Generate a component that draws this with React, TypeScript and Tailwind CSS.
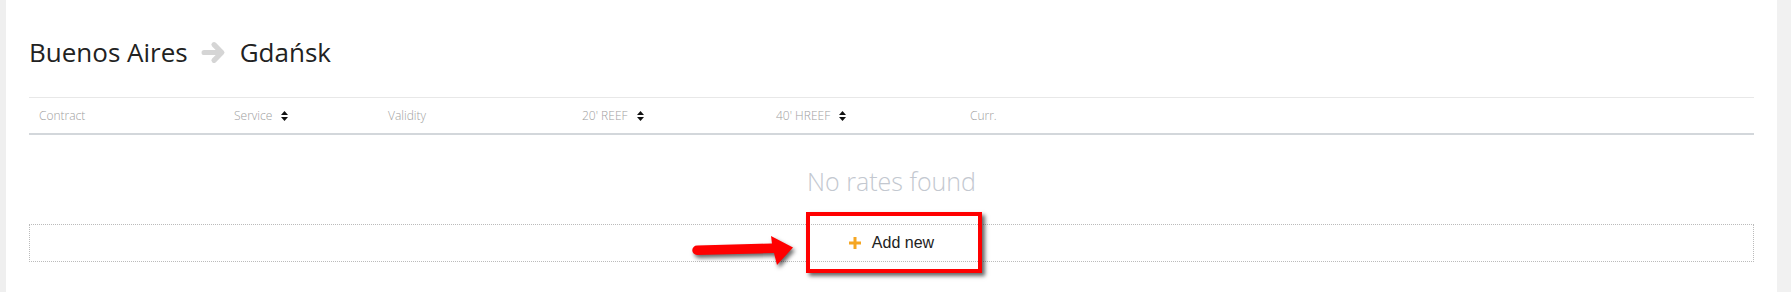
import { ReactNode } from 'react';

function SortIcon() {
  return (
    <svg width="7" height="10" viewBox="0 0 7 10" className="ml-[9px] shrink-0">
      <path d="M0 4 L3.5 0 L7 4 Z" fill="#111" />
      <path d="M0 6 L3.5 10 L7 6 Z" fill="#111" />
    </svg>
  );
}

function HeaderCell({ children, sortable }: { children: ReactNode; sortable?: boolean }) {
  return (
    <div className="flex items-center pl-[10px] text-[12px] font-light text-[#a0a0a0]">
      <span>{children}</span>
      {sortable && <SortIcon />}
    </div>
  );
}

export default function App() {
  return (
    <div className="flex h-[292px] w-full bg-[#f1f1f1] font-['Open_Sans',sans-serif]">
      <div className="w-[6px] shrink-0 bg-[#efefef]" />
      <div className="flex-1 bg-white px-[23px]">
        <h2 className="mt-[35px] flex items-center text-[26px] leading-[34px] text-[#222]">
          <span>Buenos Aires</span>
          <svg width="25" height="25" viewBox="0 0 24 24" className="ml-[13px] mr-[14px]">
            <path
              d="M3 12 H19 M12.5 4.5 L20 12 L12.5 19.5"
              fill="none"
              stroke="#d5d5d5"
              strokeWidth="5"
              strokeLinecap="round"
              strokeLinejoin="round"
            />
          </svg>
          <span>Gdańsk</span>
        </h2>

        <div className="mt-[28px] border-t border-[#e8e8e8]">
          <div className="grid h-[37px] grid-cols-[195px_154px_194px_194px_194px_1fr] items-center border-b-2 border-[#d3d7db]">
            <HeaderCell>Contract</HeaderCell>
            <HeaderCell sortable>Service</HeaderCell>
            <HeaderCell>Validity</HeaderCell>
            <HeaderCell sortable>20' REEF</HeaderCell>
            <HeaderCell sortable>40' HREEF</HeaderCell>
            <HeaderCell>Curr.</HeaderCell>
          </div>
        </div>

        <p className="mt-[30px] text-center text-[25px] font-light leading-[32px] text-[#c3c8d0]">
          No rates found
        </p>

        <div className="relative mt-[27px] flex h-[38px] items-center justify-center border border-dotted border-[#bbbbbb]">
          <button className="flex items-center font-['Liberation_Sans',Arial,sans-serif] text-[16px] text-[#222]">
            <svg width="12" height="12" viewBox="0 0 12 12">
              <rect x="4.5" y="0" width="3" height="12" fill="#f5a623" />
              <rect x="0" y="4.5" width="12" height="3" fill="#f5a623" />
            </svg>
            <span className="ml-[11px]">Add new</span>
          </button>

          {/* annotation overlay */}
          <div className="pointer-events-none absolute left-[calc(50%+2px)] top-[-13px] h-[61px] w-[176px] -translate-x-1/2 border-[4px] border-[#ff0000] shadow-[3px_3px_4px_rgba(0,0,0,0.6)]" />
          <svg
            width="104"
            height="34"
            viewBox="0 0 104 34"
            className="pointer-events-none absolute left-[calc(50%-200px)] top-[10px] drop-shadow-[2px_3px_2px_rgba(0,0,0,0.6)]"
          >
            <path
              d="M5 10.5 L80 8.5 L79 1 L101 12.5 L85 30 L82 18 L5 20 A4.75 4.75 0 0 1 5 10.5 Z"
              fill="#ff0000"
            />
          </svg>
        </div>
      </div>
      <div className="w-[14px] shrink-0 bg-[#f1f1f1]" />
    </div>
  );
}
